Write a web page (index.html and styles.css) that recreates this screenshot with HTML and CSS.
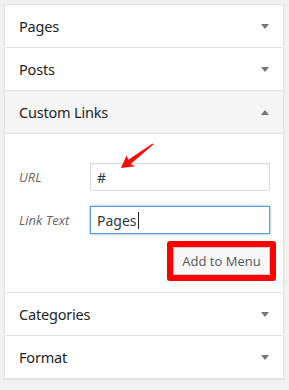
FILE: index.html
```html
<!DOCTYPE html>
<html>
<head>
<meta charset="utf-8">
<link rel="stylesheet" href="styles.css">
</head>
<body>
<div class="panel">
  <div class="section"><h3 class="title">Pages<span class="caret down"></span></h3></div>
  <div class="section"><h3 class="title">Posts<span class="caret down"></span></h3></div>
  <div class="section open">
    <h3 class="title">Custom Links<span class="caret up"></span></h3>
    <div class="content">
      <div class="form">
        <label class="lbl">URL</label>
        <div class="input">#</div>
        <label class="lbl">Link Text</label>
        <div class="input focus">Pages<span class="cursor"></span></div>
      </div>
      <div class="actions">
        <span class="highlight"><button class="btn">Add to Menu</button></span>
      </div>
      <svg class="arrow" width="60" height="40" viewBox="110 135 60 40">
        <polygon points="121,168 126.5,155.5 128.3,159.8 152.6,143.4 153.4,144.6 130.6,164 135,166.2" fill="#ff0a0a"/>
      </svg>
    </div>
  </div>
  <div class="section"><h3 class="title">Categories<span class="caret down"></span></h3></div>
  <div class="section last"><h3 class="title">Format<span class="caret down"></span></h3></div>
</div>
</body>
</html>
```
FILE: styles.css
```css
html, body { margin: 0; padding: 0; }
body {
  background: #f1f1f1;
  font-family: "Noto Sans", "Open Sans", sans-serif;
  width: 289px;
  height: 390px;
  overflow: hidden;
}
.panel {
  position: relative;
  margin: 4px 0 0 4px;
  width: 278px;
  background: #fff;
  border: 1px solid #e2e2e2;
  box-shadow: 0 1px 1px rgba(0,0,0,0.05);
}
.section { border-bottom: 1px solid #e2e2e2; }
.section.last { border-bottom: none; }
.title {
  margin: 0;
  height: 42px;
  padding: 0 14px 0 14px;
  display: flex;
  align-items: center;
  justify-content: space-between;
  font-size: 14.5px;
  font-weight: 400;
  color: #1d2327;
  letter-spacing: -0.2px;
}
.open .title { background: #f5f5f5; border-bottom: 1px solid #e2e2e2; }
.caret {
  width: 0; height: 0;
  border-left: 4px solid transparent;
  border-right: 4px solid transparent;
}
.caret.down { border-top: 5px solid #72777c; }
.caret.up { border-bottom: 5px solid #72777c; }
.content {
  position: relative;
  padding: 29px 14px 11px 14px;
}
.form {
  display: grid;
  grid-template-columns: 71px 180px;
  row-gap: 15px;
  align-items: center;
}
.lbl {
  font-style: italic;
  font-size: 13px;
  color: #666;
  font-family: "Open Sans", "Noto Sans", sans-serif;
}
.input {
  height: 26px;
  border: 1px solid #ddd;
  box-shadow: inset 0 1px 2px rgba(0,0,0,0.07);
  font-size: 14px;
  color: #32373c;
  padding: 0 6px;
  display: flex;
  align-items: center;
}
.input.focus { border-color: #5b9dd9; box-shadow: 0 0 2px rgba(30,140,190,0.8); }
.cursor { display: inline-block; width: 1px; height: 17px; background: #222; margin-left: 1px; }
.actions {
  display: flex;
  justify-content: flex-end;
  margin-top: 7px;
  margin-right: -7px;
}
.highlight {
  display: inline-flex;
  border: 6px solid #ff0000;
  border-radius: 3px;
}
.btn {
  height: 28px;
  width: 97px;
  padding: 0;
  background: #f7f7f7;
  border: 1px solid #ccc;
  border-radius: 2px;
  font-family: "Open Sans", "Noto Sans", sans-serif;
  font-size: 13px;
  color: #555;
}
.arrow {
  position: absolute;
  left: 105px;
  top: 1px;
}
```
